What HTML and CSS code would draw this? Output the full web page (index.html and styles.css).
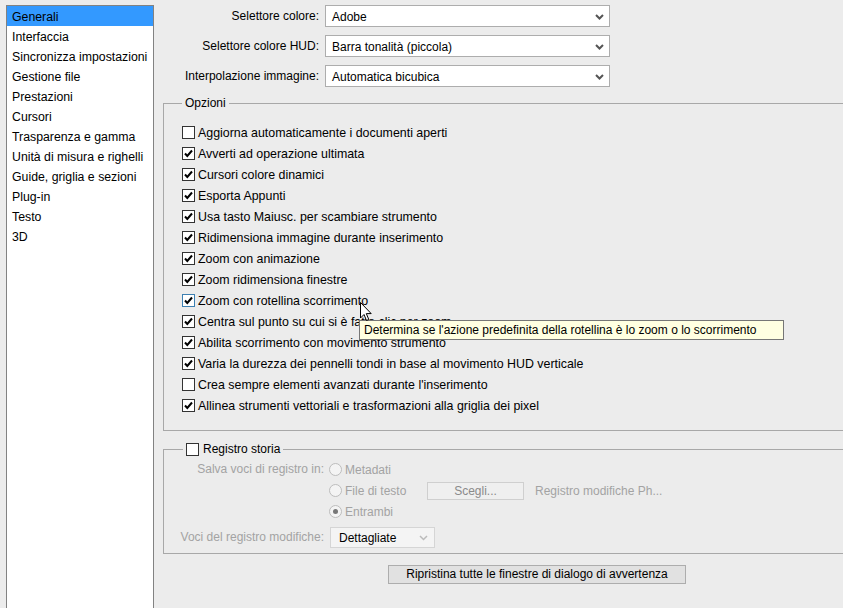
FILE: index.html
```html
<!DOCTYPE html>
<html lang="it">
<head>
<meta charset="utf-8">
<title>Preferenze</title>
<link rel="stylesheet" href="styles.css">
</head>
<body>
<div class="dialog">
  <ul class="sidebar">
    <li class="item selected">Generali</li>
    <li class="item">Interfaccia</li>
    <li class="item">Sincronizza impostazioni</li>
    <li class="item">Gestione file</li>
    <li class="item">Prestazioni</li>
    <li class="item">Cursori</li>
    <li class="item">Trasparenza e gamma</li>
    <li class="item">Unità di misura e righelli</li>
    <li class="item">Guide, griglia e sezioni</li>
    <li class="item">Plug-in</li>
    <li class="item">Testo</li>
    <li class="item">3D</li>
  </ul>
  <div class="main">
    <div class="selectors">
      <label class="sel-label">Selettore colore:</label>
      <div class="select"><span>Adobe</span><svg class="chev" width="9" height="6" viewBox="0 0 9 6"><polyline points="1,1 4.5,4.5 8,1" fill="none" stroke="#555" stroke-width="2"/></svg></div>
      <label class="sel-label">Selettore colore HUD:</label>
      <div class="select"><span>Barra tonalità (piccola)</span><svg class="chev" width="9" height="6" viewBox="0 0 9 6"><polyline points="1,1 4.5,4.5 8,1" fill="none" stroke="#555" stroke-width="2"/></svg></div>
      <label class="sel-label">Interpolazione immagine:</label>
      <div class="select"><span>Automatica bicubica</span><svg class="chev" width="9" height="6" viewBox="0 0 9 6"><polyline points="1,1 4.5,4.5 8,1" fill="none" stroke="#555" stroke-width="2"/></svg></div>
    </div>

    <fieldset class="group options">
      <legend class="legend">Opzioni</legend>
      <div class="check-row"><span class="box"></span>Aggiorna automaticamente i documenti aperti</div>
      <div class="check-row"><span class="box"><svg class="tick" viewBox="0 0 11 11"><polyline points="2,5.5 4.3,8 9,2.5" fill="none" stroke="#000" stroke-width="2"/></svg></span>Avverti ad operazione ultimata</div>
      <div class="check-row"><span class="box"><svg class="tick" viewBox="0 0 11 11"><polyline points="2,5.5 4.3,8 9,2.5" fill="none" stroke="#000" stroke-width="2"/></svg></span>Cursori colore dinamici</div>
      <div class="check-row"><span class="box"><svg class="tick" viewBox="0 0 11 11"><polyline points="2,5.5 4.3,8 9,2.5" fill="none" stroke="#000" stroke-width="2"/></svg></span>Esporta Appunti</div>
      <div class="check-row"><span class="box"><svg class="tick" viewBox="0 0 11 11"><polyline points="2,5.5 4.3,8 9,2.5" fill="none" stroke="#000" stroke-width="2"/></svg></span>Usa tasto Maiusc. per scambiare strumento</div>
      <div class="check-row"><span class="box"><svg class="tick" viewBox="0 0 11 11"><polyline points="2,5.5 4.3,8 9,2.5" fill="none" stroke="#000" stroke-width="2"/></svg></span>Ridimensiona immagine durante inserimento</div>
      <div class="check-row"><span class="box"><svg class="tick" viewBox="0 0 11 11"><polyline points="2,5.5 4.3,8 9,2.5" fill="none" stroke="#000" stroke-width="2"/></svg></span>Zoom con animazione</div>
      <div class="check-row"><span class="box"><svg class="tick" viewBox="0 0 11 11"><polyline points="2,5.5 4.3,8 9,2.5" fill="none" stroke="#000" stroke-width="2"/></svg></span>Zoom ridimensiona finestre</div>
      <div class="check-row hover"><span class="box"><svg class="tick" viewBox="0 0 11 11"><polyline points="2,5.5 4.3,8 9,2.5" fill="none" stroke="#000" stroke-width="2"/></svg></span>Zoom con rotellina scorrimento
        <svg class="cursor" width="13" height="20" viewBox="0 0 13 20"><path d="M0.5,0.5 L0.5,16 L4,12.5 L6.5,18.5 L8.8,17.5 L6.3,11.6 L11.2,11.6 Z" fill="#fff" stroke="#000" stroke-width="1"/></svg>
        <div class="tooltip">Determina se l'azione predefinita della rotellina è lo zoom o lo scorrimento</div>
      </div>
      <div class="check-row"><span class="box"><svg class="tick" viewBox="0 0 11 11"><polyline points="2,5.5 4.3,8 9,2.5" fill="none" stroke="#000" stroke-width="2"/></svg></span>Centra sul punto su cui si è fatto clic per zoom</div>
      <div class="check-row"><span class="box"><svg class="tick" viewBox="0 0 11 11"><polyline points="2,5.5 4.3,8 9,2.5" fill="none" stroke="#000" stroke-width="2"/></svg></span>Abilita scorrimento con movimento strumento</div>
      <div class="check-row"><span class="box"><svg class="tick" viewBox="0 0 11 11"><polyline points="2,5.5 4.3,8 9,2.5" fill="none" stroke="#000" stroke-width="2"/></svg></span>Varia la durezza dei pennelli tondi in base al movimento HUD verticale</div>
      <div class="check-row"><span class="box"></span>Crea sempre elementi avanzati durante l'inserimento</div>
      <div class="check-row"><span class="box"><svg class="tick" viewBox="0 0 11 11"><polyline points="2,5.5 4.3,8 9,2.5" fill="none" stroke="#000" stroke-width="2"/></svg></span>Allinea strumenti vettoriali e trasformazioni alla griglia dei pixel</div>
    </fieldset>

    <fieldset class="group history">
      <legend class="legend history-legend"><span class="box"></span>Registro storia</legend>
      <div class="hist-grid">
        <div class="hist-label">Salva voci di registro in:</div>
        <div class="radio-row"><span class="radio"></span>Metadati</div>
        <div></div>
        <div class="radio-row"><span class="radio"></span><span class="radio-text">File di testo</span><span class="btn-disabled">Scegli...</span><span class="path">Registro modifiche Ph...</span></div>
        <div></div>
        <div class="radio-row"><span class="radio on"></span>Entrambi</div>
        <div class="hist-label lower">Voci del registro modifiche:</div>
        <div class="lower"><div class="select small"><span>Dettagliate</span><span class="small-sep"></span><svg class="chev" width="9" height="6" viewBox="0 0 9 6"><polyline points="1,1 4.5,4.5 8,1" fill="none" stroke="#bbb" stroke-width="1.5"/></svg></div></div>
      </div>
    </fieldset>

    <div class="reset-wrap"><button class="reset">Ripristina tutte le finestre di dialogo di avvertenza</button></div>
  </div>
</div>
</body>
</html>
```

FILE: styles.css
```css
* { box-sizing: border-box; }
html, body { margin: 0; padding: 0; }
body {
  background: #ececec;
  font-family: "Liberation Sans", Arial, sans-serif;
  font-size: 12px;
  color: #000;
  width: 843px;
  height: 608px;
  overflow: hidden;
}
.dialog {
  display: flex;
  align-items: flex-start;
  height: 608px;
}
.sidebar {
  list-style: none;
  margin: 5px 0 0 6px;
  padding: 0;
  width: 148px;
  height: 620px;
  background: #fff;
  border: 1px solid #828282;
  flex: none;
  font-size: 12.3px;
}
.item {
  height: 20px;
  line-height: 22px;
  padding-left: 5px;
  white-space: nowrap;
}
.item.selected { background: #3399ff; }

.main {
  flex: 1;
  min-width: 0;
}
.selectors {
  display: grid;
  grid-template-columns: 165px 285px;
  grid-auto-rows: 22px;
  column-gap: 6px;
  row-gap: 8px;
  padding-top: 5px;
}
.sel-label {
  text-align: right;
  height: 22px;
  line-height: 23px;
  white-space: nowrap;
}
.select {
  height: 22px;
  background: #fff;
  border: 1px solid #adadad;
  display: flex;
  align-items: center;
  justify-content: space-between;
  padding: 1px 5px 0 6px;
}
.chev { display: block; }

.group {
  border: 1px solid #a8a8a8;
  margin: 0 -10px 0 9px;
  min-width: 0;
}
.legend {
  line-height: 14px;
  padding: 0 3px;
  margin-left: 0;
}
.options {
  margin-top: 9px;
  padding: 12px 0 14px 18px;
}
.check-row {
  position: relative;
  height: 21px;
  display: flex;
  align-items: center;
  white-space: nowrap;
  font-size: 12.4px;
}
.box {
  width: 13px;
  height: 13px;
  border: 1px solid #333;
  background: #fff;
  margin-right: 3px;
  flex: none;
  display: inline-block;
  position: relative;
}
.tick {
  position: absolute;
  left: 0;
  top: 0;
  width: 11px;
  height: 11px;
}
.hover .box { border-color: #3c7fb1; }
.cursor {
  position: absolute;
  left: 178px;
  top: 12px;
  z-index: 3;
}
.tooltip {
  position: absolute;
  left: 177px;
  top: 30px;
  height: 20px;
  width: 425px;
  background: #ffffe1;
  border: 1px solid #767676;
  padding: 0 4px;
  line-height: 19px;
  z-index: 2;
  white-space: nowrap;
  font-size: 12px;
}

.history {
  margin-top: 11px;
  padding: 2px 0 5px 9px;
  height: 112px;
}
.history-legend {
  display: flex;
  align-items: center;
  line-height: 15px;
  padding: 0 3px;
  margin-left: 10px;
}
.history-legend .box { border-color: #333; margin-right: 4px; }
.hist-grid {
  display: grid;
  grid-template-columns: 151px auto;
  column-gap: 5px;
  color: #a3a3a3;
}
.hist-label {
  text-align: right;
  line-height: 21px;
  white-space: nowrap;
}
.radio-row {
  height: 21px;
  display: flex;
  align-items: center;
  white-space: nowrap;
}
.radio {
  width: 13px;
  height: 13px;
  border-radius: 50%;
  border: 1px solid #bdbdbd;
  background: #f4f4f4;
  margin-right: 3px;
  position: relative;
  flex: none;
}
.radio.on::after {
  content: "";
  position: absolute;
  left: 3px;
  top: 3px;
  width: 5px;
  height: 5px;
  border-radius: 50%;
  background: #777;
}
.radio-text { width: 82px; }
.btn-disabled {
  width: 97px;
  height: 18px;
  border: 1px solid #cfcfcf;
  background: #efefef;
  text-align: center;
  line-height: 16px;
  color: #8a8a8a;
  margin-right: 11px;
}
.path { color: #a3a3a3; }
.lower { margin-top: 5px; }
.hist-label.lower { line-height: 21px; }
.select.small {
  width: 105px;
  height: 21px;
  margin-left: 1px;
  border-color: #d5d5d5;
  background: #f4f4f4;
  color: #000;
  padding: 0 6px 0 8px;
}
.small-sep { flex: 1; }

.reset-wrap {
  padding: 11px 0 0 234px;
}
.reset {
  font-family: inherit;
  font-size: 12px;
  color: #000;
  width: 298px;
  height: 19px;
  padding: 0;
  background: #e1e1e1;
  border: 1px solid #adadad;
  border-radius: 0;
  line-height: 17px;
}
```
